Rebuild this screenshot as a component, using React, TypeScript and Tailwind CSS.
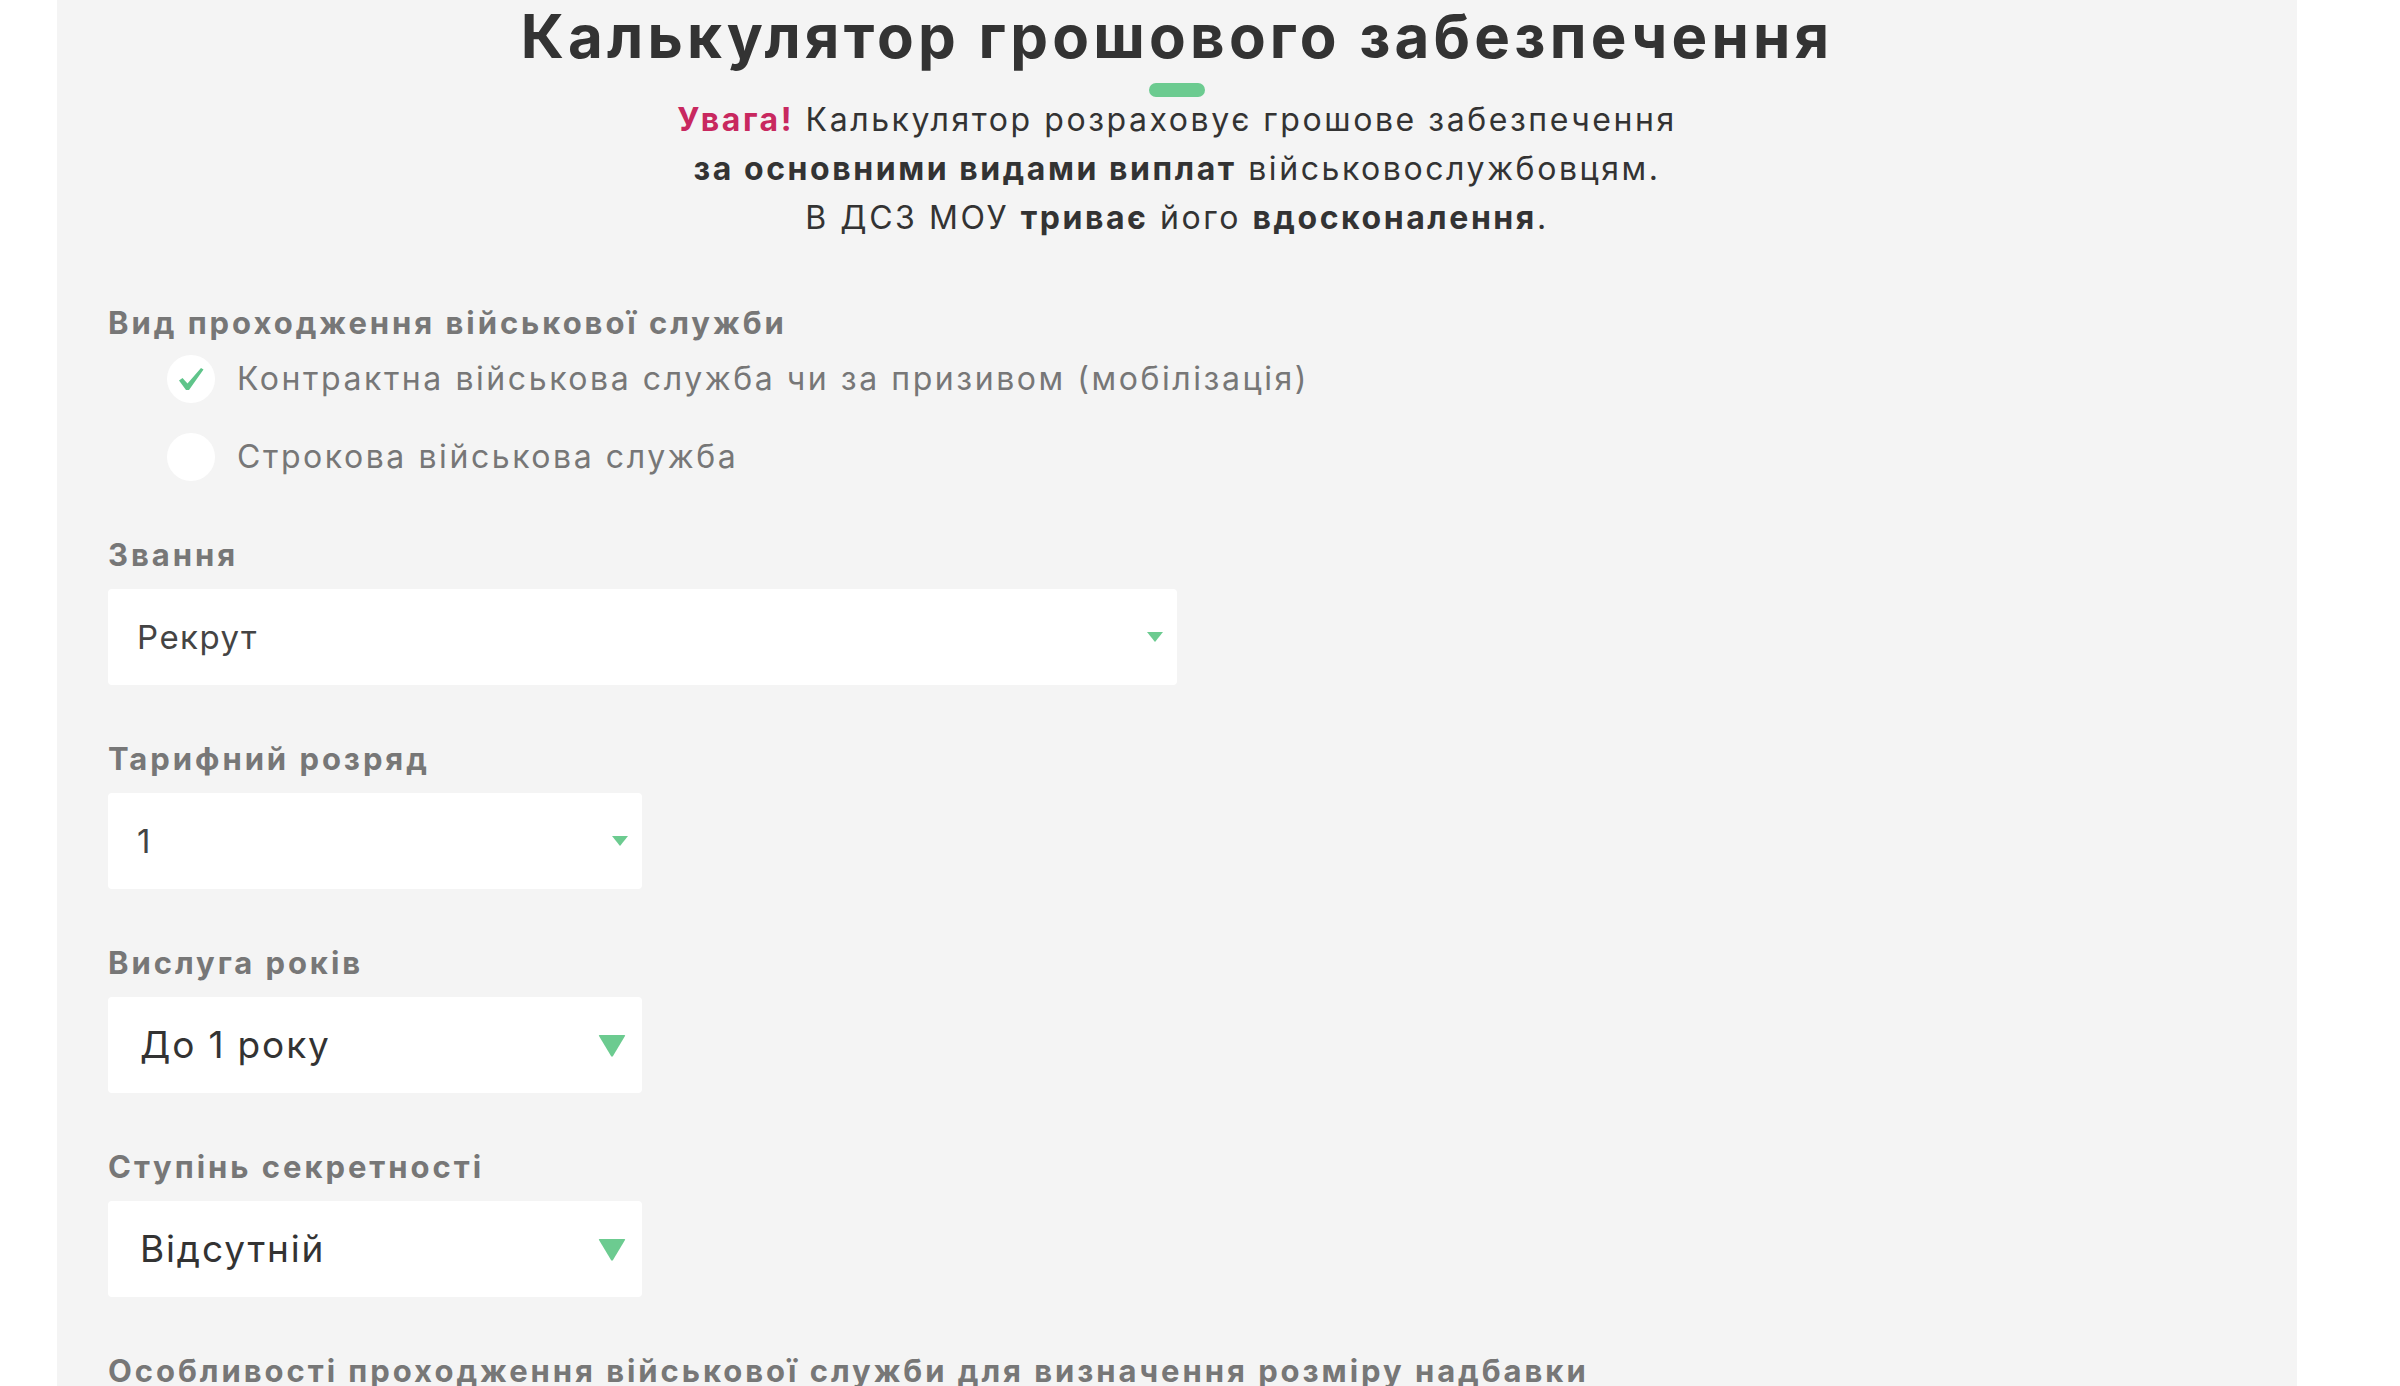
import React from 'react';

const font = { fontFamily: 'Inter, "Noto Sans", sans-serif' };

function Check() {
  return (
    <svg width="26" height="24" viewBox="0 0 26 24" className="block">
      <path d="M1 13.5 L4.5 11 L9.5 16.5 L23 1 L25.5 2.5 L11 23 L8 23 Z" fill="#5fc48a" />
    </svg>
  );
}

function Radio({ label, checked }: { label: string; checked?: boolean }) {
  return (
    <div className="flex items-center h-[48px]">
      <div className="w-[48px] h-[48px] rounded-full bg-white flex items-center justify-center shrink-0">
        {checked && <Check />}
      </div>
      <span className="ml-[22px] text-[32px] leading-[48px] tracking-[0.08em] text-[#777777] whitespace-nowrap">
        {label}
      </span>
    </div>
  );
}

function Select({
  value,
  wide,
  big,
}: {
  value: string;
  wide?: boolean;
  big?: boolean;
}) {
  return (
    <div
      className={`h-[96px] bg-white rounded-[4px] flex items-center justify-between ${
        wide ? 'w-[1069px]' : 'w-[534px]'
      } ${big ? 'pl-[32px] pr-[16px]' : 'pl-[29px] pr-[14px]'}`}
    >
      <span
        className={
          big
            ? 'text-[37px] leading-[48px] tracking-[0.05em] text-[#333333]'
            : 'text-[33px] leading-[48px] tracking-[0.045em] text-[#444444]'
        }
      >
        {value}
      </span>
      {big ? (
        <svg width="28" height="23" viewBox="0 0 28 23">
          <path d="M1.5 1 L26.5 1 Q27.5 1 27 2 L15 22 Q14 23.5 13 22 L1 2 Q0.5 1 1.5 1 Z" fill="#6ccb90" />
        </svg>
      ) : (
        <svg width="16" height="10" viewBox="0 0 16 10">
          <path d="M0 0 L16 0 L8 10 Z" fill="#6ccb90" />
        </svg>
      )}
    </div>
  );
}

function Label({ children }: { children: React.ReactNode }) {
  return (
    <div className="text-[31px] leading-[36px] font-bold tracking-[0.095em] text-[#777777] whitespace-nowrap">
      {children}
    </div>
  );
}

function Field({ label, children }: { label: string; children: React.ReactNode }) {
  return (
    <div className="flex flex-col gap-[16px]">
      <Label>{label}</Label>
      {children}
    </div>
  );
}

export default function App() {
  return (
    <div className="bg-white w-full h-[1386px] overflow-hidden" style={font}>
      <div className="ml-[57px] w-[2240px] h-[1386px] bg-[#f4f4f4] overflow-hidden">
        <h1 className="pt-[2px] text-center text-[60px] leading-[68px] font-bold tracking-[0.07em] text-[#333333]">
          Калькулятор грошового забезпечення
        </h1>
        <div className="mx-auto mt-[13px] w-[56px] h-[14px] rounded-full bg-[#6ccb90]" />
        <p className="-mt-[2px] text-center text-[32px] leading-[49px] tracking-[0.08em] text-[#333333]">
          <span className="font-bold text-[#c8285f]">Увага!</span> Калькулятор розраховує грошове
          забезпечення
          <br />
          <b>за основними видами виплат</b> військовослужбовцям.
          <br />В ДСЗ МОУ <b>триває</b> його <b>вдосконалення</b>.
        </p>

        <div className="pl-[51px] mt-[63px] flex flex-col gap-[56px]">
          <div className="flex flex-col">
            <Label>Вид проходження військової служби</Label>
            <div className="pl-[59px] mt-[14px] flex flex-col gap-[30px]">
              <Radio label="Контрактна військова служба чи за призивом (мобілізація)" checked />
              <Radio label="Строкова військова служба" />
            </div>
          </div>

          <Field label="Звання">
            <Select value="Рекрут" wide />
          </Field>

          <Field label="Тарифний розряд">
            <Select value="1" />
          </Field>

          <Field label="Вислуга років">
            <Select value="До 1 року" big />
          </Field>

          <Field label="Ступінь секретності">
            <Select value="Відсутній" big />
          </Field>

          <Label>Особливості проходження військової служби для визначення розміру надбавки</Label>
        </div>
      </div>
    </div>
  );
}
